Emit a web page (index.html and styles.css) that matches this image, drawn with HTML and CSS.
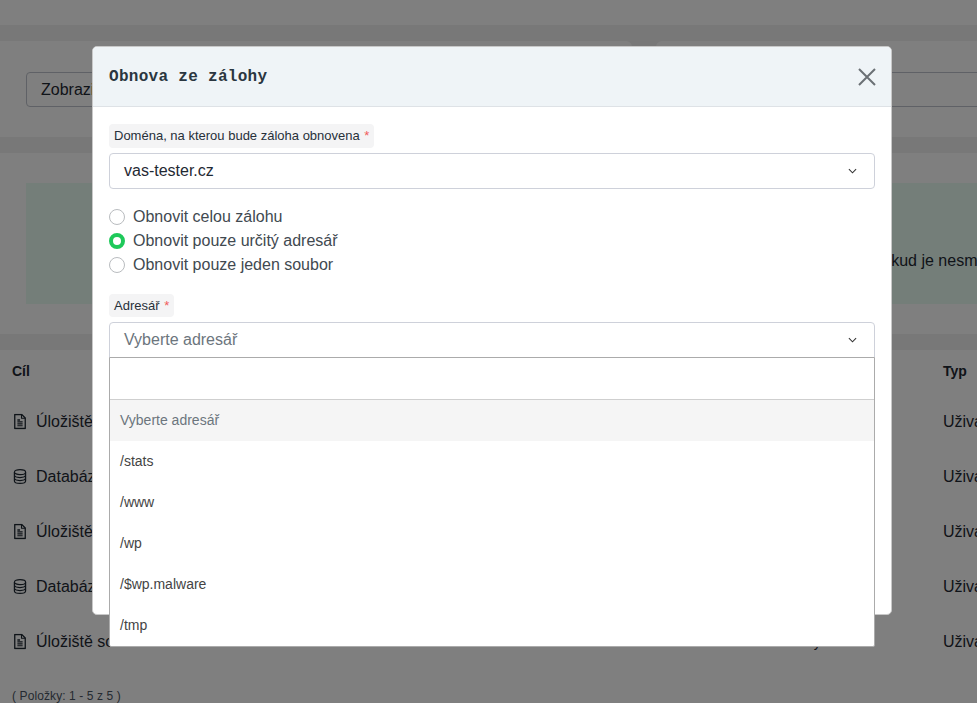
FILE: index.html
```html
<!DOCTYPE html>
<html lang="cs">
<head>
<meta charset="utf-8">
<title>Obnova ze zálohy</title>
<link rel="stylesheet" href="styles.css">
</head>
<body>
<div class="page">
  <div class="topbar"></div>
  <div class="card-row">
    <div class="mini-card wide"><div class="filter-box">Zobrazit zálohy pro všechny domény</div></div>
    <div class="mini-card"><div class="filter-box side"></div></div>
  </div>
  <section class="panel alert-panel">
    <div class="alert"><span class="alert-text">Zálohy jsou uchovávány po omezenou dobu, obnovu proveďte pouze v případě, že je to nezbytné, a pokud je nesmíte ztratit.</span></div>
  </section>
  <section class="panel table-panel">
    <div class="row head"><span>Cíl</span><span></span><span>Typ</span></div>
    <div class="row">
      <span class="target"><svg class="ico" viewBox="0 0 16 18"><use href="#file"/></svg>Úložiště souborů</span><span class="mid">Denní zálohy</span><span>Uživatel</span>
    </div>
    <div class="row">
      <span class="target"><svg class="ico" viewBox="0 0 16 18"><use href="#db"/></svg>Databáze</span><span class="mid">Denní zálohy</span><span>Uživatel</span>
    </div>
    <div class="row">
      <span class="target"><svg class="ico" viewBox="0 0 16 18"><use href="#file"/></svg>Úložiště souborů</span><span class="mid">Denní zálohy</span><span>Uživatel</span>
    </div>
    <div class="row">
      <span class="target"><svg class="ico" viewBox="0 0 16 18"><use href="#db"/></svg>Databáze</span><span class="mid">Denní zálohy</span><span>Uživatel</span>
    </div>
    <div class="row">
      <span class="target"><svg class="ico" viewBox="0 0 16 18"><use href="#file"/></svg>Úložiště souborů</span><span class="mid">Denní zálohy</span><span>Uživatel</span>
    </div>
    <p class="count">( Položky: 1 - 5 z 5 )</p>
  </section>
</div>

<svg class="defs" width="0" height="0" aria-hidden="true">
  <symbol id="file" viewBox="0 0 16 18">
    <path d="M2 1h8l4 4v12H2z" fill="none" stroke="currentColor" stroke-width="1.5" stroke-linejoin="round"/>
    <path d="M9.7 1v4.3H14" fill="none" stroke="currentColor" stroke-width="1.2"/>
    <path d="M5 9.5h6M5 11.7h6M5 13.9h6" stroke="currentColor" stroke-width="1.3"/>
    <path d="M5 7.2h3" stroke="currentColor" stroke-width="1.6"/>
  </symbol>
  <symbol id="db" viewBox="0 0 16 18">
    <ellipse cx="8" cy="4" rx="6.4" ry="2.8" fill="none" stroke="currentColor" stroke-width="1.4"/>
    <path d="M1.6 4v10c0 1.6 2.9 2.8 6.4 2.8s6.4-1.2 6.4-2.8V4M1.6 7.4c0 1.6 2.9 2.8 6.4 2.8s6.4-1.2 6.4-2.8M1.6 10.8c0 1.6 2.9 2.8 6.4 2.8s6.4-1.2 6.4-2.8" fill="none" stroke="currentColor" stroke-width="1.4"/>
  </symbol>
</svg>

<div class="overlay">
  <div class="modal">
    <header class="modal-head">
      <h2 class="modal-title">Obnova ze zálohy</h2>
      <svg class="close" viewBox="0 0 18 18"><path d="M1 1l16 16M17 1L1 17" stroke="currentColor" stroke-width="2" fill="none"/></svg>
    </header>
    <div class="modal-body">
      <label class="chip">Doména, na kterou bude záloha obnovena <i>*</i></label>
      <div class="select">
        <span class="value">vas-tester.cz</span>
        <svg class="chev" viewBox="0 0 10 6"><path d="M1 1l4 4 4-4" fill="none" stroke="currentColor" stroke-width="1.2"/></svg>
      </div>
      <div class="radios">
        <div class="radio"><span class="dot"></span>Obnovit celou zálohu</div>
        <div class="radio"><span class="dot on"></span>Obnovit pouze určitý adresář</div>
        <div class="radio"><span class="dot"></span>Obnovit pouze jeden soubor</div>
      </div>
      <label class="chip">Adresář <i>*</i></label>
      <div class="select open">
        <span class="value placeholder">Vyberte adresář</span>
        <svg class="chev" viewBox="0 0 10 6"><path d="M1 1l4 4 4-4" fill="none" stroke="currentColor" stroke-width="1.2"/></svg>
        <div class="dropdown">
          <div class="search"></div>
          <div class="opt active">Vyberte adresář</div>
          <div class="opt">/stats</div>
          <div class="opt">/www</div>
          <div class="opt">/wp</div>
          <div class="opt">/$wp.malware</div>
          <div class="opt">/tmp</div>
        </div>
      </div>
    </div>
  </div>
</div>
</body>
</html>
```

FILE: styles.css
```css
* { box-sizing: border-box; }
html, body { margin: 0; padding: 0; height: 100%; overflow: hidden; }
body { font-family: "Liberation Sans", Arial, sans-serif; color: #1f2933; background: #f0f0f0; }
.defs { position: absolute; }

.page { width: 977px; height: 703px; overflow: hidden; }
.topbar { height: 25px; background: #fff; }
.card-row { display: flex; gap: 24px; margin-top: 16px; height: 96px; }
.mini-card { flex: 1; min-width: 0; background: #fff; border-radius: 6px 0 0 0; padding: 31px 0 0 0; }
.mini-card.wide { flex: none; width: 632px; border-radius: 0 6px 0 0; padding: 31px 26px 0 26px; }
.filter-box { height: 35px; border: 1px solid #bfc3cc; border-radius: 4px; padding: 0 14px; font-size: 16px; line-height: 33px; white-space: nowrap; overflow: hidden; }
.filter-box.side { border-right: 0; border-radius: 4px 0 0 4px; }
.panel { background: #fff; }
.alert-panel { margin-top: 16px; height: 181px; padding: 30px 0 0 26px; }
.alert { width: 1000px; height: 121px; background: #e9fdf3; line-height: 155px; font-size: 16px; white-space: nowrap; overflow: hidden; }
.alert-text { margin-left: 134px; display: inline-block; }
.table-panel { margin-top: 16px; height: 353px; }
.row { display: grid; grid-template-columns: 661px 270px 120px; height: 55px; padding-left: 12px; align-items: center; font-size: 16px; }
.row.head { height: 44px; padding-bottom: 2px; font-size: 14px; font-weight: 700; }
.row .target { display: flex; align-items: center; gap: 9px; padding-left: 1px; white-space: nowrap; }
.row .mid { font-size: 14px; padding-left: 66px; white-space: nowrap; }
.ico { width: 14px; height: 17px; flex: none; color: #1f2933; }
.count { margin: 20px 0 0 12px; font-size: 12px; letter-spacing: .1px; color: #4b5563; line-height: 14px; }

.overlay { position: fixed; inset: 0; background: rgba(0,0,0,.5); padding: 46px 0 0 92px; }
.modal { width: 800px; height: 569px; background: #fff; border: 1px solid #c8c8c8; border-radius: 5px; }
.modal-head { height: 60px; background: #eff4f7; border-bottom: 1px solid #dee2e6; border-radius: 4px 4px 0 0; display: flex; align-items: center; justify-content: space-between; padding: 0 15px 0 16px; }
.modal-title { margin: 0; font: 700 16px "Liberation Mono", monospace; letter-spacing: .3px; color: #2a3640; }
.close { width: 18px; height: 18px; color: #6b7075; }
.modal-body { padding: 17px 16px 16px; }
.chip { display: inline-block; height: 23.5px; padding: 0 5px; background: #f4f4f5; border-radius: 4px; font-size: 13px; line-height: 24px; color: #27303a; vertical-align: top; }
.chip i { color: #f15b5b; font-style: normal; margin-left: 1px; }
.select { position: relative; display: flex; align-items: center; justify-content: space-between; height: 36px; margin-top: 5px; border: 1px solid #ced1da; border-radius: 4px; padding: 0 17px 0 14px; font-size: 16px; background: #fff; }
.placeholder { color: #6c757d; }
.value { display: block; }
.chev { width: 9px; height: 6px; color: #333; }
.radios { margin: 16px 0 17px; }
.radio { display: flex; align-items: center; gap: 8px; height: 24px; font-size: 16px; color: #414950; }
.dot { width: 16px; height: 16px; border-radius: 50%; border: 1px solid #b9bcbf; background: #fff; flex: none; }
.dot.on { border: 4.5px solid #1ec95a; }
.select.open { border-radius: 4px 4px 0 0; }
.dropdown { position: absolute; top: 34px; left: -1px; right: -1px; height: 290px; background: #fff; border: 1px solid #ababab; border-radius: 0 0 2px 2px; }
.search { height: 42px; border-bottom: 1px solid #cfcfcf; }
.opt { height: 41px; line-height: 41px; padding-left: 10px; font-size: 14px; color: #444; }
.opt.active { background: #f5f5f5; color: #6c757d; }
```
